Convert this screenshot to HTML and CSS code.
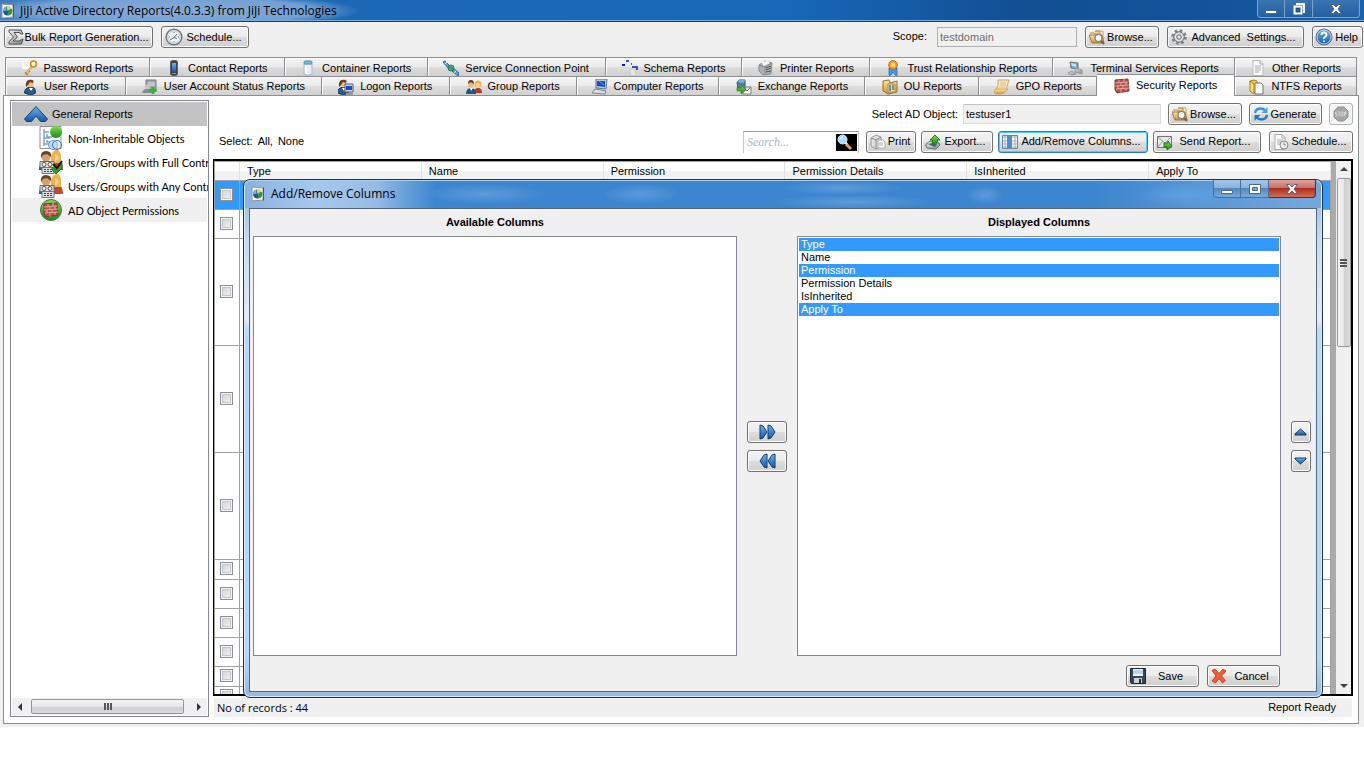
FILE: index.html
```
<!DOCTYPE html>
<html lang="en">
<head>
<meta charset="utf-8">
<title>JiJi Active Directory Reports</title>
<link rel="stylesheet" href="styles.css">
</head>
<body>
<svg class="sprite" aria-hidden="true">
  <defs>
    <linearGradient id="blue" x1="0" y1="0" x2="0" y2="1"><stop offset="0" stop-color="#6db4ee"/><stop offset="1" stop-color="#1556a8"/></linearGradient>
    <linearGradient id="steel" x1="0" y1="0" x2="1" y2="1"><stop offset="0" stop-color="#f4f4f4"/><stop offset="1" stop-color="#858585"/></linearGradient>
    <linearGradient id="gold" x1="0" y1="0" x2="0" y2="1"><stop offset="0" stop-color="#fbe9a6"/><stop offset="1" stop-color="#c99535"/></linearGradient>
    <linearGradient id="green" x1="0" y1="0" x2="0" y2="1"><stop offset="0" stop-color="#7fdc4c"/><stop offset="1" stop-color="#1f8a16"/></linearGradient>
  </defs>
  <symbol id="app" viewBox="0 0 16 16"><path d="M2 1l11 1v12l-11 1z" fill="#f7f7f2" stroke="#8c969c"/><path d="M13 2l1-1v14l-1-1z" fill="#4c565c"/><circle cx="7.500" cy="8" r="4.500" fill="#1b56a5"/><path d="M7.500 8l-1-4.500a4.500 4.500 0 0 1 5 2z" fill="#d8e04a"/><path d="M7.500 8l4.500-2a4.500 4.500 0 0 1-4 6.500z" fill="#2f9a35"/><path d="M3 8a4.500 4.500 0 0 1 3-4.300l.5 4z" fill="#6fb4ea"/></symbol>
  <symbol id="sigma" viewBox="0 0 16 16"><path d="M1 1h12l2 4h-2l-2-1.500H6L9.500 8 5 12h6l3-1.500 1-.5-1.500 5H1v-2l4.500-5L1 3z" fill="url(#steel)" stroke="#4c4f50"/></symbol>
  <symbol id="clock" viewBox="0 0 18 18"><circle cx="9" cy="9" r="7.800" fill="#f1f4f6" stroke="#70777c" stroke-width="1.500"/><circle cx="9" cy="9" r="6" fill="none" stroke="#c6cbd0"/><path d="M9 4v1M9 13v1M4 9h1M13 9h1M12 6L9 9.500 5 12M9 9.500l3 1" fill="none" stroke="#626a72"/></symbol>
  <symbol id="browse" viewBox="0 0 16 16"><path d="M1 4h4l1 1h5V2H7L6 3" fill="#f4d68c" stroke="#b78b42"/><path d="M0 6h13l2 8H3z" fill="url(#gold)" stroke="#9b7232"/><path d="M6 2h8v9" fill="none" stroke="#c6a056"/><circle cx="9.500" cy="9" r="3.500" fill="#f1f7f8" stroke="#857a68" stroke-width="1.200"/><path d="M12 12l3 3" stroke="#6f6350" stroke-width="2"/></symbol>
  <symbol id="gear" viewBox="0 0 16 16"><circle cx="8" cy="8" r="6.500" fill="none" stroke="#7d8488" stroke-width="2.600" stroke-dasharray="2.600 2.500"/><circle cx="8" cy="8" r="5.300" fill="#c4c9cc" stroke="#6d7377"/><circle cx="8" cy="8" r="3.500" fill="none" stroke="#eef0f1"/><circle cx="8" cy="8" r="2.200" fill="#eee" stroke="#666"/></symbol>
  <symbol id="help" viewBox="0 0 18 18"><circle cx="9" cy="9" r="8" fill="url(#blue)" stroke="#667"/><circle cx="9" cy="9" r="7" fill="none" stroke="#b9d7f0"/><path d="M6.500 7Q6.500 4.500 9 4.500T11.500 7Q11.500 8 10 9T9 11M9 12.500v1.500" fill="none" stroke="#fff" stroke-width="1.800"/></symbol>
  <symbol id="key" viewBox="0 0 16 16"><path d="M0 1h9v8H0z" fill="#fafafa"/><path d="M2 3h5M2 5h4" stroke="#ddd"/><circle cx="11.500" cy="4" r="3" fill="#fff4c8" stroke="#c78c22" stroke-width="1.700"/><path d="M9.500 6.500L4 14M3 12.500l3 2.500M6 10.500l2 1.500" stroke="#c88c20" stroke-width="2" fill="none"/><path d="M9 7l-4 6" stroke="#f7dc87"/></symbol>
  <symbol id="phone" viewBox="0 0 16 16"><rect x="4.500" y="0.500" width="7" height="15" rx="2" fill="#39434b" stroke="#59626a"/><path d="M6 3h4v9H6z" fill="url(#blue)"/><path d="M6 13h4v1H6z" fill="#8b969d"/></symbol>
  <symbol id="jar" viewBox="0 0 16 16"><path d="M4 4h8v10q-4 3-8 0z" fill="#e7f0f4" stroke="#a5b7bf"/><rect x="4" y="1" width="8" height="3" rx="1" fill="#79bbd9" stroke="#5294b5"/><path d="M6 5v9" stroke="#fff" stroke-width="2"/><path d="M12 13l3 2" stroke="#ccd" stroke-width="2"/></symbol>
  <symbol id="satellite" viewBox="0 0 16 16"><path d="M0 2l2-1 5 5-2 2zM9 11l2-2 5 4-1 3z" fill="#5ca6dc" stroke="#276595"/><path d="M2 4l2-2M11 13l2-2" stroke="#d7ecfc"/><circle cx="8" cy="8" r="3" fill="#4bb74d" stroke="#267084"/><path d="M6 7l4 2" stroke="#246abe"/></symbol>
  <symbol id="schema" viewBox="0 0 16 16"><path d="M1 5h1M4 1h3M9 4h1M10 7h5v3" fill="none" stroke="#0717e7" stroke-width="1.500"/><path d="M0 5h3" stroke="#0717e7" stroke-width="2"/><path d="M9 9h4v6H9zM10 11h2M10 13h2" fill="#fff" stroke="#c9c9c9"/></symbol>
  <symbol id="printer" viewBox="0 0 16 16"><path d="M1 5l6-4 7 2-1 11-8 1-4-4z" fill="#aeb1b2" stroke="#8a8d8e"/><path d="M1 5l6 2v8M7 7l7-4" fill="none" stroke="#888"/><path d="M3 2l7-1 2 2-6 3z" fill="#f7f7f7"/><path d="M8 8l5-2M8 10l5-2M8 12l5-1" stroke="#555"/></symbol>
  <symbol id="medal" viewBox="0 0 16 16"><path d="M4 8v7.500l2-.5 2-3 2 3 2 .5V8z" fill="#4599d8" stroke="#2065a0" stroke-width=".7"/><circle cx="8" cy="5" r="4.300" fill="#f6a529" stroke="#b76813"/><circle cx="8" cy="5" r="2" fill="#ffd873"/></symbol>
  <symbol id="terminal" viewBox="0 0 16 16"><path d="M2 2l8 1v6l-7-1z" fill="#79a8cb" stroke="#61717b"/><path d="M3 3l5 1v3l-4-1z" fill="#b8e5ff"/><path d="M7 8l7 2v4l-7-2zM4 11l4 3-5 1-3-2z" fill="url(#steel)" stroke="#92989c"/></symbol>
  <symbol id="document" viewBox="0 0 16 16"><path d="M3 .5h7l3 3v12H3z" fill="#fafafa" stroke="#bbb"/><path d="M10 1v3h3M5 6h6M5 8h6M5 10h6M5 12h4" fill="none" stroke="#a8a8a8"/></symbol>
  <symbol id="user" viewBox="0 0 16 16"><path d="M2.500 14q0-5 5.500-6t5.500 6q-4 3-11 0z" fill="#295e92" stroke="#153958"/><path d="M7 9l2 3 2-3z" fill="#fff"/><circle cx="8.500" cy="5" r="3.200" fill="#edbd83"/><path d="M4 8Q3 1 8 .8T11 4L8 3 6 6z" fill="#65401e"/></symbol>
  <symbol id="account" viewBox="0 0 16 16"><path d="M4 1h10v11H4z" fill="#a3a8aa" stroke="#777c7e"/><path d="M6 4h7M6 6h7" stroke="#e4e4e4"/><circle cx="5" cy="8" r="2.500" fill="#c8c8c8"/><path d="M0 14q1-4 5-4t5 4z" fill="#828b91"/><path d="M11 8v7M7.500 11.500h7" stroke="#32b529" stroke-width="3"/></symbol>
  <symbol id="logon" viewBox="0 0 16 16"><use href="#user" x="-3" y="0"/><path d="M7 5h8v8H7z" fill="#cfd7de" stroke="#54616c"/><path d="M8 7h6v4H8z" fill="#1749cd"/><path d="M8 15h7" stroke="#999" stroke-width="2"/></symbol>
  <symbol id="group" viewBox="0 0 16 16"><circle cx="12" cy="5" r="3.500" fill="#e8b74e"/><circle cx="12" cy="6" r="2" fill="#f9d3a3"/><path d="M8 14q0-5 4-5t4 5z" fill="#b73829"/><path d="M0 15q0-6 5-6t5 6z" fill="#1e5781"/><path d="M4 9l1 3 2-3z" fill="#fff"/><circle cx="5" cy="5.500" r="3" fill="#e8b981"/><path d="M2 5q0-4 3-4t3 4L5 3z" fill="#5d3b23"/></symbol>
  <symbol id="computer" viewBox="0 0 16 16"><path d="M4 0h11l-1 10-10-1z" fill="#bec7d2" stroke="#64758a"/><path d="M5 2h8v6l-8-1z" fill="#174dcc"/><path d="M7 2l5 4" stroke="#72a8f6"/><path d="M3 10l11 2-1 3-13-1z" fill="#dfe0e3" stroke="#7d858e"/></symbol>
  <symbol id="exchange" viewBox="0 0 16 16"><path d="M1 3l2-2h6v9l-7 1z" fill="#5d7b91" stroke="#405666"/><path d="M1 3l2-2h6L8 4z" fill="#70b1dd"/><path d="M7 8h8v7H7zl4 4 4-4" fill="#f8f8f8" stroke="#818181"/><path d="M1 9h4V6l5 5-5 4v-3H1z" fill="url(#green)" stroke="#277b28" stroke-width=".6"/></symbol>
  <symbol id="ou" viewBox="0 0 16 16"><path d="M1 2l6-1 1 3 7-2v11L6 15 1 12z" fill="url(#gold)" stroke="#967329"/><path d="M6 5h7v8H6z" fill="#eee1b7" stroke="#ad8d47"/><path d="M8 6v6M11 6v5" stroke="#728e8c" stroke-width="2"/></symbol>
  <symbol id="gpo" viewBox="0 0 16 16"><path d="M4 1h11l-3 10H2q3-4 2-10z" fill="#f7e3b8" stroke="#cba976"/><path d="M0 12q1-2 3-2h11q-3 4-6 5H2q-2 0-2-3z" fill="url(#gold)" stroke="#cba468"/><path d="M6 4h6M6 6h6M5 8h6" stroke="#dcc48e"/></symbol>
  <symbol id="brick" viewBox="0 0 16 16"><path d="M1 2l13-1 1 12-12 2-2-3z" fill="#b4524b" stroke="#7b3734"/><path d="M1 5l13-1M1 8l14-1M2 11l13-1M5 2v3M10 1v3M7 5v3M12 4v3M4 8v3M9 8v3M7 11v4M12 10v3" stroke="#e6a8a0"/></symbol>
  <symbol id="ntfs" viewBox="0 0 16 16"><path d="M1 2l4-1 3 1v12l-6-1z" fill="#f1cf4a" stroke="#a68020"/><path d="M6 4h6l2 2v9H6z" fill="#fafafa" stroke="#777"/><path d="M1 2l4 3v10l-4-3z" fill="#f8df69" stroke="#9f841f"/></symbol>
  <symbol id="refresh" viewBox="0 0 16 16"><path d="M2 7Q3 2.500 7.500 2.500q3 0 4.500 2" fill="none" stroke="#3c8fdc" stroke-width="2.400"/><path d="M14.500 1v6h-6z" fill="#4d9fe6"/><path d="M14 9q-1 4.500-5.500 4.500-3 0-4.500-2" fill="none" stroke="#2a77c8" stroke-width="2.400"/><path d="M1.500 15V9h6z" fill="#2a77c8"/></symbol>
  <symbol id="stop" viewBox="0 0 16 16"><path d="M5 1h6l4 4v6l-4 4H5l-4-4V5z" fill="#a6a6a6" stroke="#929292"/><path d="M4 6H2.500v2H4v2H2.500M5 6h2M6 6v4M8 6h2v4H8zM11.500 10V6H13v2h-1.500" fill="none" stroke="#ddd" stroke-width=".8"/></symbol>
  <symbol id="search" viewBox="0 0 21 17"><path d="M0 0h21v17H0z"/><path d="M10 10l5 5" stroke="#e99b55" stroke-width="3"/><path d="M9 8l2 2" stroke="#fff" stroke-width="2"/><circle cx="6.500" cy="5.500" r="4.500" fill="#a7dcff" stroke="#d8efff"/><path d="M4 5q1-2 3-2" stroke="#fff" fill="none"/></symbol>
  <symbol id="print" viewBox="0 0 16 16"><path d="M1 4l5-3 5 2v9l-5 3-5-3z" fill="#e1e1e1" stroke="#999"/><path d="M1 4l5 2v9M6 6l5-3" fill="none" stroke="#888"/><path d="M8 6h5l2 2v6H8z" fill="#fff" stroke="#aaa"/><path d="M9 9h4M9 11h4" stroke="#aaa"/></symbol>
  <symbol id="export" viewBox="0 0 16 16"><path d="M1 10l4-3 9 2 1 2-4 4-9-1-1-2z" fill="url(#steel)" stroke="#5f6a71"/><path d="M3 10l4-1 5 1-2 3z" fill="#455e71"/><path d="M7.500 10V6H5l5-5 5 5h-2.500q0 3-1.500 4z" fill="url(#green)" stroke="#248719"/></symbol>
  <symbol id="columns" viewBox="0 0 16 16"><path d="M.5 1.500h15v13H.5z" fill="#fff" stroke="#728493"/><path d="M1 2h14v2H1z" fill="#ced5dc"/><path d="M1 7h14M1 10h14M1 13h14M3 2v12M13 2v12" stroke="#9cacbc"/><path d="M5 2h5v12H5z" fill="#4b8ed6"/></symbol>
  <symbol id="send" viewBox="0 0 16 16"><path d="M.5 2.500h14v11H.5z" fill="#e8e8e8" stroke="#757575"/><path d="M1 3l7 6 6-6M1 13l5-6M14 13l-4-6" fill="none" stroke="#9a9a9a"/><path d="M7 9h4V7l4 5-5 4v-3H7z" fill="url(#green)" stroke="#23761a"/></symbol>
  <symbol id="schedule" viewBox="0 0 16 16"><path d="M2 .5h7l3 3v12H2z" fill="#fcfcfc" stroke="#aaa"/><path d="M9 1v3h3M4 6h6M4 8h5M4 10h4" fill="none" stroke="#aaa"/><circle cx="11" cy="11" r="4" fill="#f1f1f1" stroke="#888"/><path d="M11 8.500V11h2" fill="none" stroke="#888"/></symbol>
  <symbol id="collapse" viewBox="0 0 24 16"><path d="M12 .5L.500 13l2 2.500h5L12 10l4.500 5.500h5l2-2.500z" fill="url(#blue)" stroke="#16436e"/></symbol>
  <symbol id="inherit" viewBox="0 0 24 24"><path d="M1 .5h21v22H1z" fill="#fff" stroke="#8a9199"/><path d="M5 3v17M5 6h5M5 12h6M5 18h6M8 8v3h5M8 14v2h5" fill="none" stroke="#7fa5c8" stroke-width="1.500"/><circle cx="17" cy="6" r="6" fill="url(#green)"/><circle cx="14" cy="19" r="4.500" fill="#bcdcf4" stroke="#5f9ac8"/><circle cx="18" cy="19" r="4.500" fill="#bcdcf4" fill-opacity=".5" stroke="#3c79b3"/></symbol>
  <symbol id="people" viewBox="0 0 24 24"><path d="M11 20q1-9 7-9t6 9z" fill="#bd4730"/><path d="M0 20q0-8 7-8v8z" fill="#28608c"/><path d="M12 13Q11 1 17 0t5 13z" fill="#eab54c"/><path d="M16 4q4 1 4 5l-4 3z" fill="#f6cb98"/><circle cx="7" cy="7" r="4.500" fill="#d7a06d"/><path d="M2 8Q1 1 7 1t5 6L8 4 4 5z" fill="#66442d"/><path d="M1 11.500h14v6H1z" fill="#eee" stroke="#666"/><circle cx="5" cy="14.500" r="2" fill="#fff" stroke="#444"/><circle cx="11" cy="14.500" r="2" fill="#fff" stroke="#444"/><path d="M3 17.500h12v6H3z" fill="#ddd" stroke="#777"/><path d="M5 19.500h2M8 19.500h2M11 19.500h2M5 21.500h2M8 21.500h2M11 21.500h2" stroke="#444"/></symbol>
  <symbol id="fullpeople" viewBox="0 0 24 24"><use href="#people"/><path d="M13 17l4 3 6-7v5l-6 6-4-4z" fill="#33a129" stroke="#247d21"/><path d="M14 14l4 4 5-7" stroke="#211" stroke-width="2" fill="none"/></symbol>
  <symbol id="permission" viewBox="0 0 24 24"><circle cx="12" cy="12" r="10.500" fill="url(#green)" stroke="#53674d"/><svg x="4" y="4" width="16" height="16"><use href="#brick"/></svg></symbol>
  <symbol id="forward" viewBox="0 0 17 16"><path d="M1 1l3 1 4 6-4 6-3 1zM9 1l3 1 4 6-4 6-3 1z" fill="url(#blue)" stroke="#173b65"/></symbol>
  <symbol id="back" viewBox="0 0 17 16"><path d="M16 1l-3 1-4 6 4 6 3 1zM8 1L5 2 1 8l4 6 3 1z" fill="url(#blue)" stroke="#173b65"/></symbol>
  <symbol id="up" viewBox="0 0 13 8"><path d="M6.500 1L1 6v1h11V6z" fill="url(#blue)" stroke="#183b61"/></symbol>
  <symbol id="down" viewBox="0 0 13 8"><path d="M6.500 7L1 2V1h11v1z" fill="url(#blue)" stroke="#183b61"/></symbol>
  <symbol id="save" viewBox="0 0 16 16"><path d="M.5.5h15v15h-14l-1-1z" fill="#394753" stroke="#1d2831"/><path d="M3 1h10v7H3z" fill="#e7f4fc"/><path d="M3 3h10M3 5h10" stroke="#86b6d6"/><path d="M4 10h8v5H4z" fill="#d0d3d5"/><path d="M9 11h2v4H9z" fill="#25313a"/></symbol>
  <symbol id="cancel" viewBox="0 0 16 16"><path d="M1 2.500L4 1l4 4.500L12 1l3 2-4.500 5 4 4.500-3 2.500L8 10.500 4.500 15 1 13l4-5z" fill="#f05e35" stroke="#c9452c"/></symbol>
  <symbol id="min" viewBox="0 0 14 14"><path d="M1.500 8.500h11v3h-11z" fill="#fff" stroke="#536983"/></symbol>
  <symbol id="restore" viewBox="0 0 14 14"><path d="M5 3V2h7v8h-1M2.500 4.500h7v7h-7z" fill="none" stroke="#fff" stroke-width="2"/><path d="M4.500 6.500h3v3h-3z" fill="none" stroke="#264d79"/></symbol>
  <symbol id="max" viewBox="0 0 14 14"><path d="M1.500 2.500h11v9h-11z" fill="#fff" stroke="#536983"/><path d="M4.500 5.500h5v3h-5z" fill="#79a8d6" stroke="#536983"/></symbol>
  <symbol id="close" viewBox="0 0 14 14"><path d="M1.500 2.500h3L7 5l2.500-2.500h3L9 7l3.500 4.500h-3L7 9l-2.500 2.500h-3L5 7z" fill="#fff" stroke="#59606d"/></symbol>
</svg>

<div class="app">
  <header class="titlebar">
    <svg class="i16"><use href="#app"/></svg>
    <h1 class="title">JiJi Active Directory Reports(4.0.3.3) from JiJi Technologies</h1>
    <div class="winbuttons">
      <button class="winbtn" aria-label="Minimize"><svg class="i14"><use href="#min"/></svg></button>
      <button class="winbtn" aria-label="Restore"><svg class="i14"><use href="#restore"/></svg></button>
      <button class="winbtn wide" aria-label="Close"><svg class="i14"><use href="#close"/></svg></button>
    </div>
  </header>

  <div class="toolbar">
    <button class="btn bulk"><svg class="i16"><use href="#sigma"/></svg><span>Bulk Report Generation...</span></button>
    <button class="btn sched"><svg class="i18"><use href="#clock"/></svg><span>Schedule...</span></button>
    <label class="scope" for="scope">Scope:</label>
    <input class="field scopefield" id="scope" value="testdomain" disabled>
    <button class="btn browse"><svg class="i16"><use href="#browse"/></svg><span>Browse...</span></button>
    <button class="btn advanced"><svg class="i16"><use href="#gear"/></svg><span>Advanced &nbsp;Settings...</span></button>
    <button class="btn help"><svg class="i18"><use href="#help"/></svg><span>Help</span></button>
  </div>

  <nav class="tabs">
    <div class="tabrow rowone">
      <button class="tab"><svg class="i16"><use href="#key"/></svg>Password Reports</button>
      <button class="tab"><svg class="i16"><use href="#phone"/></svg>Contact Reports</button>
      <button class="tab"><svg class="i16"><use href="#jar"/></svg>Container Reports</button>
      <button class="tab"><svg class="i16"><use href="#satellite"/></svg>Service Connection Point</button>
      <button class="tab"><svg class="i16"><use href="#schema"/></svg>Schema Reports</button>
      <button class="tab"><svg class="i16"><use href="#printer"/></svg>Printer Reports</button>
      <button class="tab"><svg class="i16"><use href="#medal"/></svg>Trust Relationship Reports</button>
      <button class="tab"><svg class="i16"><use href="#terminal"/></svg>Terminal Services Reports</button>
      <button class="tab"><svg class="i16"><use href="#document"/></svg>Other Reports</button>
    </div>
    <div class="tabrow rowtwo">
      <button class="tab"><svg class="i16"><use href="#user"/></svg>User Reports</button>
      <button class="tab"><svg class="i16"><use href="#account"/></svg>User Account Status Reports</button>
      <button class="tab"><svg class="i16"><use href="#logon"/></svg>Logon Reports</button>
      <button class="tab"><svg class="i16"><use href="#group"/></svg>Group Reports</button>
      <button class="tab"><svg class="i16"><use href="#computer"/></svg>Computer Reports</button>
      <button class="tab"><svg class="i16"><use href="#exchange"/></svg>Exchange Reports</button>
      <button class="tab"><svg class="i16"><use href="#ou"/></svg>OU Reports</button>
      <button class="tab"><svg class="i16"><use href="#gpo"/></svg>GPO Reports</button>
      <button class="tab active"><svg class="i16"><use href="#brick"/></svg>Security Reports</button>
      <button class="tab"><svg class="i16"><use href="#ntfs"/></svg>NTFS Reports</button>
    </div>
  </nav>

  <main class="page">
    <aside class="tree">
      <div class="treehead"><svg class="i24x16"><use href="#collapse"/></svg>General Reports</div>
      <a class="node" href="#"><svg class="i24"><use href="#inherit"/></svg>Non-Inheritable Objects</a>
      <a class="node" href="#"><svg class="i24"><use href="#fullpeople"/></svg>Users/Groups with Full Contro</a>
      <a class="node" href="#"><svg class="i24"><use href="#people"/></svg>Users/Groups with Any Contro</a>
      <a class="node current" href="#"><svg class="i24"><use href="#permission"/></svg>AD Object Permissions</a>
      <div class="hscroll"><i class="arrow left"></i><div class="hthumb"><i class="grip"></i></div><i class="arrow right"></i></div>
    </aside>

    <section class="report">
      <div class="objectbar">
        <label for="object">Select AD Object:</label>
        <input class="field objectfield" id="object" value="testuser1" readonly>
        <button class="btn browse"><svg class="i16"><use href="#browse"/></svg><span>Browse...</span></button>
        <button class="btn generate"><svg class="i16"><use href="#refresh"/></svg><span>Generate</span></button>
        <button class="btn stop" aria-label="Stop" disabled><svg class="i16"><use href="#stop"/></svg></button>
      </div>
      <div class="actions">
        <div class="select"><span>Select:</span><a href="#">All,</a><a href="#">None</a></div>
        <div class="search"><input class="searchfield" aria-label="Search" placeholder="Search..."><button class="searchbtn" aria-label="Find"><svg class="isearch"><use href="#search"/></svg></button></div>
        <button class="btn print"><svg class="i16"><use href="#print"/></svg><span>Print</span></button>
        <button class="btn export"><svg class="i16"><use href="#export"/></svg><span>Export...</span></button>
        <button class="btn focus"><svg class="i16"><use href="#columns"/></svg><span>Add/Remove Columns...</span></button>
        <button class="btn send"><svg class="i16"><use href="#send"/></svg><span>Send Report...</span></button>
        <button class="btn schedule"><svg class="i16"><use href="#schedule"/></svg><span>Schedule...</span></button>
      </div>

      <div class="gridwrap">
        <div class="grid">
          <div class="rows">
            <table class="table">
              <thead><tr><th class="check"></th><th>Type</th><th>Name</th><th>Permission</th><th>Permission Details</th><th>IsInherited</th><th>Apply To</th></tr></thead>
              <tbody>
                <tr class="medium selected"><td><input type="checkbox" aria-label="Select record 1"></td><td colspan="6"></td></tr>
                <tr class="medium"><td><input type="checkbox" aria-label="Select record 2"></td><td colspan="6"></td></tr>
                <tr class="tall"><td><input type="checkbox" aria-label="Select record 3"></td><td colspan="6"></td></tr>
                <tr class="tall"><td><input type="checkbox" aria-label="Select record 4"></td><td colspan="6"></td></tr>
                <tr class="tall"><td><input type="checkbox" aria-label="Select record 5"></td><td colspan="6"></td></tr>
                <tr class="short"><td><input type="checkbox" aria-label="Select record 6"></td><td colspan="6"></td></tr>
                <tr class="medium"><td><input type="checkbox" aria-label="Select record 7"></td><td colspan="6"></td></tr>
                <tr class="medium"><td><input type="checkbox" aria-label="Select record 8"></td><td colspan="6"></td></tr>
                <tr class="medium"><td><input type="checkbox" aria-label="Select record 9"></td><td colspan="6"></td></tr>
                <tr class="short"><td><input type="checkbox" aria-label="Select record 10"></td><td colspan="6"></td></tr>
                <tr class="short"><td><input type="checkbox" aria-label="Select record 11"></td><td colspan="6"></td></tr>
              </tbody>
            </table>
          </div>
          <div class="vscroll"><i class="arrow top"></i><div class="vthumb"><i class="grip vertical"></i></div><i class="arrow bottom"></i></div>
        </div>

        <div class="dialog" role="dialog" aria-labelledby="dialog-title">
          <div class="dialoghead">
            <svg class="i16"><use href="#app"/></svg>
            <h2 class="title" id="dialog-title">Add/Remove Columns</h2>
            <div class="winbuttons">
              <button class="winbtn" aria-label="Minimize"><svg class="i14"><use href="#min"/></svg></button>
              <button class="winbtn" aria-label="Maximize"><svg class="i14"><use href="#max"/></svg></button>
              <button class="winbtn wide red" aria-label="Close"><svg class="i14"><use href="#close"/></svg></button>
            </div>
          </div>
          <div class="client">
            <div class="chooser">
              <div class="listcol"><label class="listlabel" for="available">Available Columns</label><select class="list" id="available" multiple size="6"></select></div>
              <div class="move"><button class="btn" aria-label="Add"><svg class="i17"><use href="#forward"/></svg></button><button class="btn" aria-label="Remove"><svg class="i17"><use href="#back"/></svg></button></div>
              <div class="listcol"><label class="listlabel" for="displayed">Displayed Columns</label>
                <select class="list" id="displayed" multiple size="6">
                  <option selected>Type</option><option>Name</option><option selected>Permission</option><option>Permission Details</option><option>IsInherited</option><option selected>Apply To</option>
                </select></div>
              <div class="move order"><button class="btn" aria-label="Move up"><svg class="i13"><use href="#up"/></svg></button><button class="btn" aria-label="Move down"><svg class="i13"><use href="#down"/></svg></button></div>
            </div>
            <div class="dialogfoot">
              <button class="btn"><svg class="i16"><use href="#save"/></svg><span>Save</span></button>
              <button class="btn"><svg class="i16"><use href="#cancel"/></svg><span>Cancel</span></button>
            </div>
          </div>
        </div>
      </div>
      <footer class="status"><span class="records">No of records : 44</span><span>Report Ready</span></footer>
    </section>
  </main>
</div>
</body>
</html>
```
FILE: styles.css
```
* { box-sizing: border-box; }
body { margin: 0; background: #fff; color: #000; font: 11px/13px "Liberation Sans", Arial, sans-serif; }
button, input, select { font: inherit; color: inherit; margin: 0; }
a { color: inherit; text-decoration: none; }
svg { display: block; flex: none; }
.sprite { position: absolute; width: 0; height: 0; }
.i13 { width: 13px; height: 8px; }
.i14 { width: 14px; height: 14px; }
.i16 { width: 16px; height: 16px; }
.i17 { width: 17px; height: 16px; }
.i18 { width: 18px; height: 18px; }
.i24 { width: 24px; height: 24px; }
.i24x16 { width: 24px; height: 16px; }
.isearch { width: 21px; height: 17px; }

.app { display: flex; flex-direction: column; height: calc(100vh - 41px); min-height: 480px; background: #f0f0f0; }

/* Window title bar */
.titlebar { display: flex; align-items: center; flex: none; height: 22px; gap: 4px; border-bottom: 1px solid #143e6e;
  box-shadow: inset 0 -1px #76a9da;
  background: radial-gradient(ellipse 190px 18px at 170px 11px, #86acd9 0, #74a0d3 75%, transparent 100%), linear-gradient(90deg, #3f7dbd 0, #1c68b5 25%, #1867b8 58%, #124f93 75%, #13549b 90%, #1d62ab 100%); }
.title { flex: 1; margin: 0; font: 12px/16px "Open Sans", "Noto Sans", sans-serif; white-space: nowrap; }
.winbuttons { display: flex; align-self: flex-start; margin-right: 4px; }
.winbtn { display: flex; align-items: center; justify-content: center; width: 28px; height: 18px; padding: 0; border: 1px solid #7fa2c6; border-width: 0 1px 1px 0; background: linear-gradient(#3a75b2, #225f9f); }
.winbtn:first-child { border-left-width: 1px; border-bottom-left-radius: 4px; }
.winbtn:last-child { border-bottom-right-radius: 4px; }
.winbtn.wide { width: 47px; }

/* Buttons and fields */
.btn { display: flex; align-items: center; flex: none; height: 22px; padding: 0 3px; border: 1px solid #707070; border-radius: 3px; box-shadow: inset 0 0 0 1px #fcfcfc; background: linear-gradient(#f3f3f3 0, #ebebeb 50%, #dddddd 50%, #cfcfcf 100%); white-space: nowrap; }
.btn span { flex: 1; text-align: center; }
.btn.focus { width: 150px; border-color: #267fb5; box-shadow: inset 0 0 0 1px #48d0fb; }
.btn.bulk { width: 149px; }
.btn.sched { width: 88px; }
.btn.browse { width: 74px; }
.btn.advanced { width: 137px; }
.btn.help { width: 51px; padding: 0 2px; }
.btn.generate { width: 73px; }
.btn.stop { width: 24px; border-color: #adb2b5; background: #f4f4f4; }
.btn.print { width: 50px; }
.btn.export { width: 72px; }
.btn.send { width: 108px; }
.btn.schedule { width: 84px; }
.field { height: 20px; padding: 0 2px; border: 1px solid #dcdcdc; border-top-color: #c4c4c4; background: #f0f0f0; }
.toolbar { display: flex; align-items: center; flex: none; height: 35px; padding: 0 1px 5px 4px; gap: 8px; }
.scope { margin-left: auto; margin-right: 2px; padding-bottom: 2px; }
.scopefield { width: 140px; color: #6d6d6d; border-color: #afafaf; }

/* Report tabs */
.tabs { flex: none; padding: 0 7px 0 5px; }
.tabrow { display: grid; height: 19px; border-left: 1px solid #8c8e94; }
.rowone { grid-template-columns: 144fr 135fr 143fr 178fr 137fr 128fr 183fr 182fr 122fr; }
.rowtwo { grid-template-columns: 120fr 196fr 128fr 127fr 143fr 146fr 114fr 118fr 138fr 122fr; }
.tab { display: flex; align-items: center; justify-content: center; min-width: 0; padding: 2px 0 0; gap: 6px; border: 1px solid #8c8e94; border-width: 1px 1px 0 0; box-shadow: inset 1px 1px #fcfcfc; background: linear-gradient(#f3f3f3 0, #ebebeb 50%, #dddddd 50%, #cfcfcf 100%); white-space: nowrap; }
.rowtwo .tab { padding-top: 0; }
.rowtwo .tab.active { height: 22px; margin-top: -2px; padding: 0; background: #fff; z-index: 1; }

/* Page body */
.page { display: flex; flex: 1; min-height: 0; margin: 0 5px 3px 3px; padding: 4px 5px 6px 6px; gap: 4px; border: 1px solid #8c8e94; background: #fff; }
.tree { display: flex; flex-direction: column; flex: none; width: 199px; padding: 1px; border: 1px solid #828790; overflow: hidden; }
.treehead, .node { display: flex; align-items: center; flex: none; height: 24px; white-space: nowrap; }
.treehead { padding-left: 12px; gap: 4px; background: #c3c3c3; }
.node { padding-left: 27px; gap: 5px; font-family: Lato, "Liberation Sans", sans-serif; }
.node.current { background: #f0f0f0; }
.hscroll { display: flex; align-items: center; margin-top: auto; padding: 0 6px; gap: 9px; height: 17px; background: #f0f0f0; }
.hthumb { display: flex; align-items: center; justify-content: center; flex: 1; height: 15px; margin-right: 4px; border: 1px solid #979797; border-radius: 2px; background: linear-gradient(#f4f4f4 0, #e6e6e6 50%, #d0d0d0 50%, #dadada 100%); }
.arrow { flex: none; width: 0; height: 0; border: 4px solid transparent; }
.arrow.left { border-left-width: 0; border-right-color: #333; }
.arrow.right { border-right-width: 0; border-left-color: #333; }
.arrow.top { border-top-width: 0; border-bottom-color: #444; }
.arrow.bottom { border-bottom-width: 0; border-top-color: #444; }
.grip { width: 8px; height: 7px; background: repeating-linear-gradient(90deg, #555 0 2px, transparent 2px 3px); }
.grip.vertical { background: repeating-linear-gradient(#555 0 2px, transparent 2px 3px); width: 7px; height: 8px; }

.report { display: flex; flex-direction: column; flex: 1; min-width: 0; }
.objectbar { display: flex; align-items: center; justify-content: flex-end; flex: none; height: 28px; gap: 7px; }
.objectbar label { margin-right: -2px; }
.objectfield { width: 198px; }
.actions { display: flex; align-items: center; flex: none; height: 27px; gap: 5px; }
.select { display: flex; flex: 1; gap: 5px; padding-left: 6px; }
.search { display: flex; align-items: center; width: 116px; height: 22px; margin-right: 2px; padding-right: 1px; border: 1px solid #c9c9c9; border-top-color: #999; border-bottom: 0; }
.searchfield { flex: 1; min-width: 0; padding: 0 3px; border: 0; background: transparent; font: italic 12px/16px "Liberation Serif", serif; }
.searchfield::placeholder { color: #a8b8c8; }
.searchbtn { padding: 0; border: 0; }
.btn.schedule { margin-left: 3px; }

/* Results grid */
.gridwrap { position: relative; flex: 1; min-height: 0; margin-top: 4px; }
.grid { display: flex; height: 100%; border: 2px solid #000; border-width: 2px 2px 2px 1px; overflow: hidden; }
.rows { flex: 1; min-width: 0; border-top: 1px solid #a0a0a0; border-left: 1px solid #a0a0a0; overflow: hidden; }
.table { width: 100%; table-layout: fixed; border-collapse: separate; border-spacing: 0; }
th { height: 19px; padding: 0 7px; border-right: 1px solid #e0e0e0; border-bottom: 1px solid #a0a0a0; background: linear-gradient(#fff 50%, #f2f2f2 50%); font-weight: normal; text-align: left; }
th.check { width: 25px; }
td { padding: 0 0 2px; border: 1px solid #a0a0a0; border-width: 0 1px 1px 0; text-align: center; }
.short td { height: 20px; }
.medium td { height: 29px; }
.tall td { height: 107px; }
.selected td { background: #3399ff; }
input[type="checkbox"] { appearance: none; display: block; width: 13px; height: 13px; margin: 0 5px; border: 1px solid #8e8f8f; box-shadow: inset 0 0 0 1px #f4f4f4, inset 0 0 0 2px #c4c8cc; background: linear-gradient(135deg, #cbcfd5, #f6f6f6); }
.vscroll { display: flex; flex-direction: column; align-items: center; flex: none; width: 20px; padding: 6px 0; gap: 7px; border-left: 5px solid #aaa; background: #f0f0f0; }
.vthumb { display: flex; align-items: center; justify-content: center; width: 14px; height: 169px; margin-bottom: auto; border: 1px solid #979797; border-radius: 2px; background: linear-gradient(90deg, #f4f4f4 0, #e6e6e6 50%, #d0d0d0 50%, #dadada 100%); }
.status { display: flex; align-items: center; justify-content: space-between; flex: none; height: 19px; margin: 2px 1px 0; padding: 0 16px 0 3px; background: #f0f0f0; }
.records { font: 11px/16px "Open Sans", "Noto Sans", sans-serif; }

/* Floating column dialog */
.dialog { position: absolute; top: 20px; right: 30px; bottom: -2px; left: 30px; display: flex; flex-direction: column; padding: 0 5px 5px; border: 1px solid #26323f; border-radius: 7px; box-shadow: inset 0 0 0 1px #d7eafd; background: linear-gradient(#8db6e0 0, #c5daf0 60px, #e1eefb 140px, #b9d9fd 150px, #b5d7fc 92%, #98b9da 100%); }
.dialoghead { display: flex; align-items: center; flex: none; height: 28px; margin: 0 -4px; padding-left: 5px; gap: 5px; border-radius: 6px 6px 0 0; box-shadow: inset 0 1px #a9cff2;
  background:
    radial-gradient(ellipse 60px 10px at 240px 14px, #5f9bd8 0, transparent 100%),
    radial-gradient(ellipse 38px 10px at 396px 14px, #5c9ad8 0, transparent 100%),
    radial-gradient(ellipse 60px 7px at 598px 8px, #5f9bd8 0, transparent 100%),
    radial-gradient(ellipse 80px 7px at 608px 22px, #5f9bd8 0, transparent 100%),
    radial-gradient(ellipse 18px 9px at 740px 15px, #5f9bd8 0, transparent 100%),
    radial-gradient(ellipse 45px 12px at 940px 15px, #60a0e0 0, transparent 100%),
    linear-gradient(90deg, #8bb2de 0, #a6c8ed 70px, #97bce5 130px, #3d86cf 190px, #3d86cf 850px, #73a6dc 1060px); }
.dialog .winbuttons { margin-right: 5px; }
.dialog .winbtn { border-color: #496f98; background: linear-gradient(#a4c5e8 0, #88b1df 50%, #5487bc 50%, #79aad9 100%); }
.dialog .winbtn.red { border-color: #5b2932; background: linear-gradient(#dca29b 0, #ca6c62 50%, #ae2d22 50%, #cf7051 100%); }
.client { display: flex; flex-direction: column; flex: 1; min-height: 0; border: 1px solid #55677c; padding: 0 0 4px 3px; background: #f0f0f0; }
.chooser { display: flex; flex: 1; min-height: 0; }
.listcol { display: flex; flex: 1; flex-direction: column; min-width: 0; }
.listlabel { flex: none; height: 27px; padding-top: 7px; font-weight: bold; text-align: center; }
.list { appearance: none; flex: 1; width: 100%; min-height: 0; padding: 1px; border: 1px solid #828790; border-radius: 0; background: #fff; outline: 0; overflow: hidden; }
.list option { height: 13px; min-height: 13px; padding: 0 2px; line-height: 13px; }
.list option:checked { background: linear-gradient(#3399ff, #3399ff); -webkit-text-fill-color: #fff; }
.move { display: flex; flex: none; flex-direction: column; align-items: center; justify-content: center; width: 60px; padding-top: 27px; gap: 7px; }
.move .btn { justify-content: center; width: 40px; }
.order { width: 35px; padding-right: 1px; padding-left: 5px; }
.order .btn { width: 20px; padding: 0; }
.dialogfoot { display: flex; justify-content: flex-end; flex: none; padding: 9px 36px 0 0; gap: 8px; }
.dialogfoot .btn { width: 73px; }
```
